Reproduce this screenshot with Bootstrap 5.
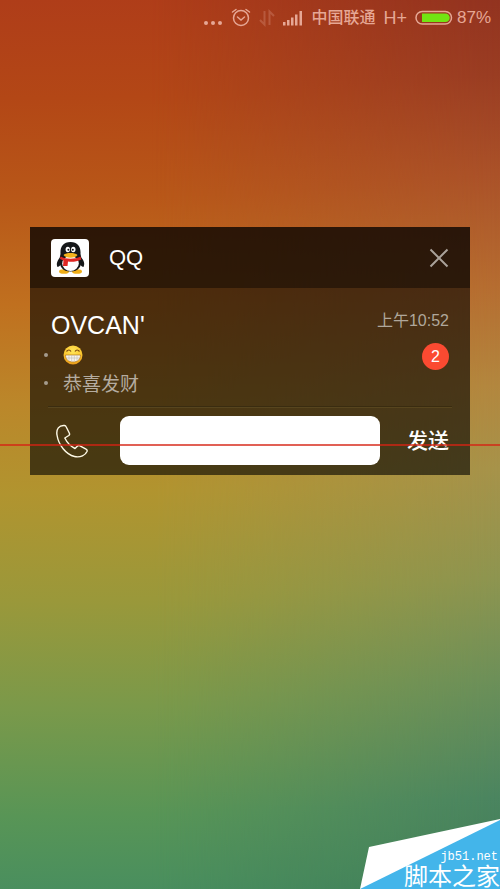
<!DOCTYPE html>
<html lang="zh-CN">
<head>
<meta charset="utf-8">
<meta name="viewport" content="width=device-width, initial-scale=1">
<title>QQ</title>
<link href="https://cdn.jsdelivr.net/npm/bootstrap@5.3.0/dist/css/bootstrap.min.css" rel="stylesheet">
<style>
body { font-family: "Liberation Sans", "Noto Sans CJK SC", sans-serif; }
.lock-screen {
  isolation: isolate;
  background: linear-gradient(177deg, #417e58 0%, #4b8560 10%, #6d9059 23%, #8e9550 34%, #a7934a 46%, #b3873f 55%, #b66d31 66%, #ab5229 78%, #9a3d23 89%, #90301f 100%);
  background: linear-gradient(177deg, #90301f 0%, #9a3d23 11%, #ab5229 22%, #b66d31 34%, #b3873f 45%, #a7934a 54%, #8e9550 66%, #6d9059 77%, #4b8560 90%, #417e58 100%);
}
.lock-screen::before {
  content: ""; position: absolute; inset: 0; z-index: -1;
  background: linear-gradient(179deg, #af3d19 0%, #b34716 11%, #b85718 22%, #c0701f 34%, #bb872a 45%, #b1942f 55%, #9a983a 67%, #7a994a 79%, #589556 91%, #488e5f 100%);
  -webkit-mask-image: linear-gradient(to right, #000 30%, transparent 100%);
  mask-image: linear-gradient(to right, #000 30%, transparent 100%);
}
.status-bar { height: 35px; padding-right: 9px; color: #e6a795; font-size: 17px; line-height: 20px; }
.carrier { font-size: 16px; font-weight: 500; }
.network { font-size: 18px; }
.notice { margin: 192px 30px 0; background: rgba(0,0,0,.6); color: #fff; }
.notice-head { height: 61px; padding: 0 21px; background: rgba(0,0,0,.4); }
.app-name { font-size: 22px; line-height: 28px; margin-left: 20px; }
.notice-body { padding: 21px 21px 9px; }
.sender { font-size: 25px; line-height: 32px; }
.lines { font-family: "Noto Sans CJK SC", sans-serif; font-size: 19px; line-height: 28px; color: #b5aca0; }
.lines li { height: 28px; }
.lines li::before { content: ""; width: 4px; height: 4px; border-radius: 50%; background: #a59b8d; margin-left: -7px; margin-right: 15px; }
.stamp { font-size: 16px; line-height: 24px; color: #b0a79b; }
.count { width: 27px; height: 27px; margin-top: 10px; font-size: 16px; background: #fb4a31 !important; }
.rule { margin: 0 18px; border-top: 1px solid #3a2c10; border-bottom: 1px solid #57451e; }
.reply { padding: 8px 21px 10px; gap: 27px; }
.reply-input { height: 49px; border: 0; border-radius: 9px; min-width: 0; }
.call { width: 42px; height: 42px; }
.send { font-size: 21px; font-weight: 500; line-height: 28px; color: #fff; }
.send, .send:hover { color: #fff; }
.strike { left: -30px; right: -30px; bottom: 29px; height: 2px; background: rgba(214,34,20,.72); pointer-events: none; }
.site { width: 140px; height: 70px; right: 0; bottom: 0; }
.site-art { inset: 0; }
.site-url { font: 12px/14px "Liberation Mono", monospace; padding-right: 2px; }
.site-name { font-size: 24px; line-height: 25px; }
</style>
<script src="https://cdn.jsdelivr.net/npm/bootstrap@5.3.0/dist/js/bootstrap.bundle.min.js"></script>
</head>
<body>
<div class="lock-screen position-relative min-vh-100 overflow-hidden">
  <header class="status-bar d-flex align-items-center justify-content-end">
    <svg class="me-2" width="20" height="20" fill="currentColor" aria-hidden="true"><circle cx="3" cy="15" r="2"/><circle cx="10" cy="15" r="2"/><circle cx="17" cy="15" r="2"/></svg>
    <svg width="20" height="20" fill="none" stroke="currentColor" stroke-width="1.500" stroke-linecap="round" aria-hidden="true"><circle cx="10" cy="10" r="7.500"/><path d="M6.500 9 10 12 13.500 9M1.500 4 5 1.500M18.500 4 15 1.500"/></svg>
    <svg class="mx-2" width="16" height="20" fill="none" stroke="currentColor" stroke-width="2" opacity=".28" aria-hidden="true"><path d="M5.500 3v13.500L1 12M10.500 17V3.500L15 8"/></svg>
    <svg class="me-2" width="20" height="20" fill="currentColor" aria-hidden="true"><path d="M0 14h2.500v3.500H0zM4 12h2.500v5.500H4zM8 9.500h2.500v8H8zM12 6.500h2.500v11H12zM16.500 3H19v14.500h-2.500z"/></svg>
    <span class="carrier me-2">中国联通</span>
    <span class="network me-2">H+</span>
    <svg class="me-1" width="38" height="16" aria-hidden="true"><rect x="1" y="1.500" width="35.500" height="12.500" rx="6.250" fill="none" stroke="currentColor" stroke-width="1.500"/><path d="M7 3.500h23.500a4.250 4.250 0 0 1 0 8.500H7z" fill="#72e512"/></svg>
    <span>87%</span>
  </header>

  <main class="notice position-relative">
    <div class="notice-head d-flex align-items-center">
      <svg width="38" height="38" viewBox="0 0 38 38" aria-hidden="true">
        <rect width="38" height="38" rx="4" fill="#fff"/>
        <ellipse cx="13" cy="32.500" rx="5" ry="2.300" fill="#f0ae18"/><ellipse cx="26" cy="32.500" rx="5" ry="2.300" fill="#f0ae18"/>
        <path d="M10.500 17C6 21 5 25 6.500 28c2 0 3.500-3 4-4zM28.500 17c5 4 5.500 8 4 11-2 0-3.500-3-4-4z" fill="#151719"/>
        <path d="M19.500 3c-7.500 0-10.500 5-10 12-2.500 9-.5 17.500 10 17.500s12.500-8.500 10-17.500C30 8 27 3 19.500 3z" fill="#151719"/>
        <ellipse cx="19.500" cy="24.500" rx="8.300" ry="7.500" fill="#fff"/>
        <ellipse cx="16.800" cy="10.500" rx="2.200" ry="2.800" fill="#fff"/><ellipse cx="22.300" cy="10.500" rx="2.200" ry="2.800" fill="#fff"/>
        <circle cx="17.400" cy="10.700" r="1" fill="#111"/><circle cx="21.800" cy="10.700" r="1" fill="#111"/>
        <path d="M12.500 16c3-2.600 11-2.600 14 0-2 3.600-12 3.600-14 0z" fill="#f5b31c"/>
        <path d="M9.500 17.500c6 3 14 3 20 0l.8 3c-4 2.200-9.300 2.600-13.300 2.100l-.5 4.500H12l.5-5.500-3.500-1.500z" fill="#df2723"/>
      </svg>
      <span class="app-name">QQ</span>
      <button type="button" class="btn p-0 border-0 ms-auto d-flex" aria-label="关闭">
        <svg width="20" height="20" fill="none" stroke="#aaa29a" stroke-width="2"><path d="M1.500 1.500 18.500 18.500M18.500 1.500 1.500 18.500"/></svg>
      </button>
    </div>

    <div class="notice-body d-flex justify-content-between">
      <div>
        <div class="sender">OVCAN'</div>
        <ul class="lines list-unstyled mb-0">
          <li class="d-flex align-items-center">
            <svg width="20" height="20" viewBox="0 0 20 20" role="img" aria-label="呲牙">
              <defs><radialGradient id="face" cx=".5" cy=".3" r=".75"><stop offset="0" stop-color="#ffe65a"/><stop offset=".65" stop-color="#fbc52b"/><stop offset="1" stop-color="#e58c13"/></radialGradient></defs>
              <circle cx="10" cy="10" r="9.500" fill="url(#face)"/>
              <path d="M3.500 6.500Q6 3.500 8 6.500M12 6.500Q14 3.500 16.500 6.500" fill="none" stroke="#77440d" stroke-width="1.200"/>
              <path d="M2.500 10h15c0 4.500-3 7-7.500 7s-7.500-2.500-7.500-7z" fill="#f8f5ee" stroke="#b3761d" stroke-width=".7"/>
              <path d="M3.500 13h13M6 10v5.500M8.700 10v6.500M11.300 10v6.500M14 10v5.500" stroke="#bdb9b4" stroke-width=".6"/>
            </svg>
          </li>
          <li class="d-flex align-items-center">恭喜发财</li>
        </ul>
      </div>
      <div class="d-flex flex-column align-items-end">
        <time class="stamp" datetime="10:52">上午10:52</time>
        <span class="count badge rounded-circle p-0 fw-normal d-flex align-items-center justify-content-center">2</span>
      </div>
    </div>

    <div class="rule"></div>
    <form class="reply d-flex align-items-center">
      <button type="button" class="call btn p-0 border-0 flex-shrink-0 d-flex align-items-center justify-content-center" aria-label="拨打电话">
        <svg width="34" height="34" viewBox="0 0 34 34" fill="none" stroke="#fffbe8" stroke-width="1.400" stroke-linejoin="round"><path d="M9.500 1.500C4 1 1 5 2 11c1.500 10 9 19.500 17.500 21.500 6 1.300 11-1.500 12.500-5 .4-1-.1-2-1-2.300l-6.500-3.500c-1-.5-1.600-.2-2.200.5L20 24.500C15 22 12 18.500 9.800 14l4-2.500c.9-.6 1-1.300.6-2.300L11 2.500c-.3-.7-.8-.9-1.500-1z"/></svg>
      </button>
      <input type="text" class="reply-input form-control" aria-label="回复">
      <button type="submit" class="send btn p-0 border-0 flex-shrink-0">发送</button>
    </form>
    <div class="strike position-absolute"></div>
  </main>

  <footer class="site position-absolute d-flex flex-column align-items-end justify-content-end">
    <svg class="site-art position-absolute" width="140" height="70" aria-hidden="true"><path d="M9 28 140 0v70H0z" fill="#fff"/><path d="M140 1v69H0z" fill="#43b5ea"/></svg>
    <a href="#" class="position-relative text-white text-decoration-none text-end">
      <span class="site-url d-block">jb51.net</span>
      <span class="site-name d-block">脚本之家</span>
    </a>
  </footer>
</div>
</body>
</html>
